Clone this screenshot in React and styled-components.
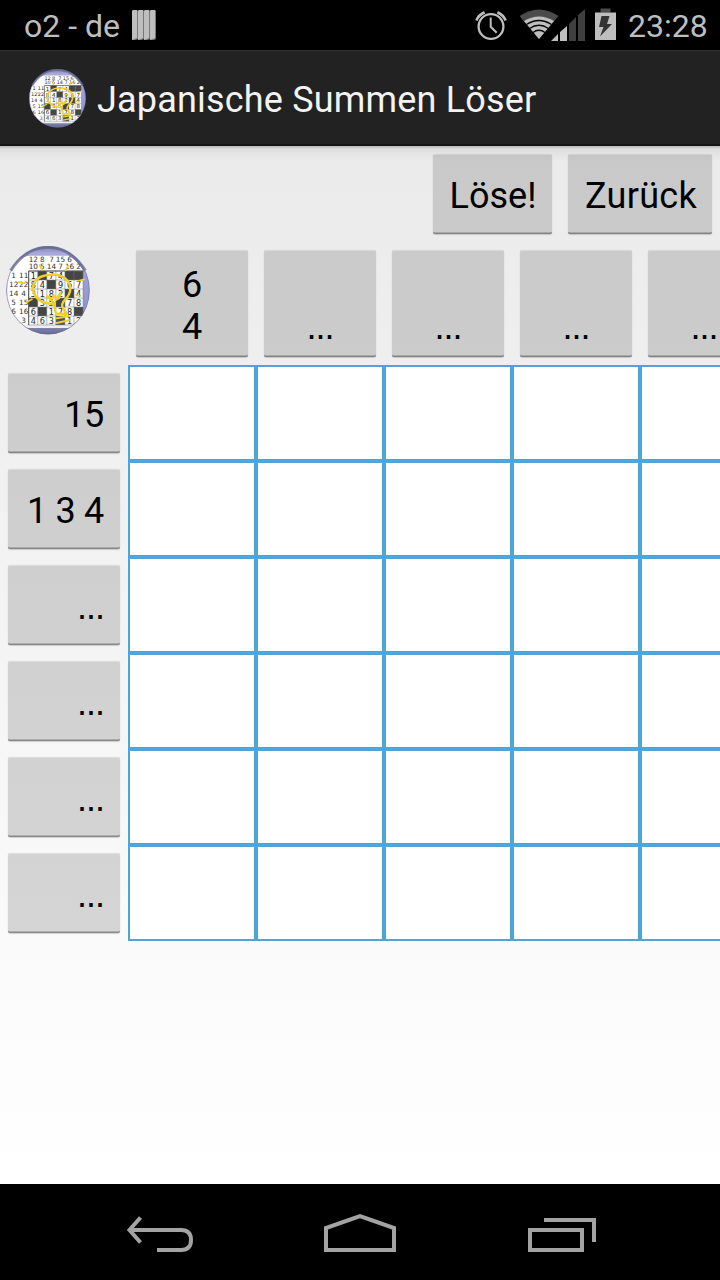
import React from "react";
import styled, { createGlobalStyle } from "styled-components";

const GlobalStyle = createGlobalStyle`
  *, *::before, *::after { box-sizing: border-box; }
  body { margin: 0; background: #000; }
`;

const Screen = styled.div`
  display: flex;
  flex-direction: column;
  width: 720px;
  height: 1280px;
  overflow: hidden;
  font-family: Roboto, sans-serif;
`;

const StatusBar = styled.header`
  display: flex;
  align-items: center;
  flex: none;
  height: 50px;
  padding: 2px 12px 0 24px;
  background: #000;
  color: #bebebe;
  font-size: 32px;
  line-height: 48px;
`;

const Carrier = styled.span`
  width: 108px;
  white-space: nowrap;
`;

const NotificationIcon = styled.svg`
  display: block;
  margin-top: -2px;
`;

const StatusIcons = styled.svg`
  display: block;
  margin-left: auto;
  margin-top: -2px;
`;

const Clock = styled.time`
  width: 80px;
  margin-left: 12px;
  white-space: nowrap;
`;

const ActionBar = styled.div`
  display: flex;
  align-items: center;
  flex: none;
  height: 96px;
  padding: 1px 0 0 29px;
  gap: 11px;
  background: #222;
  border-top: 1px solid #303030;
  border-bottom: 2px solid #171517;
`;

const Title = styled.h1`
  margin: 4px 0 0;
  color: #f3f3f3;
  font-size: 36px;
  font-weight: 400;
  line-height: 42px;
  letter-spacing: 0.18px;
  white-space: nowrap;
`;

const Content = styled.main`
  flex: 1;
  min-height: 0;
  overflow: hidden;
  background: linear-gradient(rgba(0, 0, 0, 0.22), rgba(0, 0, 0, 0.05) 3px, transparent 16px),
    linear-gradient(#ebebeb, #ececec 8%, #fff);
`;

const Actions = styled.div`
  display: flex;
  justify-content: flex-end;
  gap: 16px;
  padding: 8px 8px 0 0;
  height: 96px;
`;

const KeyButton = styled.button`
  display: flex;
  align-items: ${(p) => p.$align || "center"};
  justify-content: ${(p) => p.$justify || "center"};
  flex: none;
  width: ${(p) => p.$width}px;
  height: ${(p) => p.$height}px;
  padding: ${(p) => p.$padding || "4px 0 0 1px"};
  border: 0;
  border-radius: 2px;
  background: rgba(78, 78, 78, 0.215);
  box-shadow: inset 0 -2px 0 -0.5px rgba(0, 0, 0, 0.35), inset 0 1px 0 rgba(255, 255, 255, 0.25),
    0 1px 1px rgba(0, 0, 0, 0.16), 0 0 1px rgba(0, 0, 0, 0.14);
  color: #000;
  font: 400 36px/42px Roboto, sans-serif;
  letter-spacing: ${(p) => p.$spacing || "0"};
  white-space: pre-line;
`;

const Dots = styled.span`
  font-family: "Liberation Sans", sans-serif;
  letter-spacing: -1px;
`;

const HeaderRow = styled.div`
  display: flex;
  height: 123px;
  padding-top: 8px;
`;

const LogoSlot = styled.div`
  flex: none;
  width: 136px;
  padding: 0 0 0 6px;
  margin-top: -4px;
`;

const ColumnKeys = styled.div`
  display: flex;
  gap: 16px;
`;

const Board = styled.div`
  display: flex;
`;

const RowKeys = styled.div`
  display: flex;
  flex-direction: column;
  gap: 16px;
  flex: none;
  width: 128px;
  padding: 8px 0 0 8px;
`;

const Cells = styled.div`
  display: grid;
  grid-template-columns: repeat(5, 128px);
  grid-auto-rows: 96px;
`;

const Cell = styled.div`
  background: #fff;
  border: 2px solid #4fa5d8;
`;

const NavBar = styled.nav`
  flex: none;
  display: flex;
  align-items: flex-start;
  height: 96px;
  padding: 28px 124px 0 126px;
  justify-content: space-between;
  background: #000;
`;

const NavIcon = styled.svg`
  display: block;
  fill: none;
  stroke: #a3a3a3;
  stroke-width: 4;
`;

const LogoDrawing = styled.svg`
  display: block;
  flex: none;
  font-family: "DejaVu Sans", sans-serif;
  font-size: 24.5px;
  text-anchor: middle;
`;

const puzzle = ["1#74##", "84#967", "3182#4", "#35#78", "6#178#", "463#12"];
const columnSums = [
  ["12", "8", "7", "15", "6", ""],
  ["10", "5", "14", "7", "16", "2"],
];
const rowSums = [["1", "11"], ["12", "22"], ["14", "4"], ["5", "15"], ["6", "16"], ["", "3"]];

function Logo({ id, width, height }) {
  return (
    <LogoDrawing width={width} height={height} viewBox="18 18 252 267" preserveAspectRatio="none">
      <defs>
        <clipPath id={`${id}-clip`}><ellipse cx="144" cy="151" rx="125" ry="132" /></clipPath>
        <linearGradient id={`${id}-ring`} x1="0" y1="0" x2="0" y2="1">
          <stop offset="0" stopColor="#777ba4" />
          <stop offset="0.08" stopColor="#a9a8da" />
          <stop offset="0.85" stopColor="#8d8fd0" />
          <stop offset="1" stopColor="#5b5e91" />
        </linearGradient>
        <linearGradient id={`${id}-shade`} x1="0" y1="0" x2="0" y2="1">
          <stop offset="0.75" stopColor="#fff" stopOpacity="0" />
          <stop offset="1" stopColor="#777" stopOpacity="0.3" />
        </linearGradient>
      </defs>
      <g clipPath={`url(#${id}-clip)`}>
        <rect x="18" y="18" width="252" height="267" fill={`url(#${id}-ring)`} />
        <path d="M20 114Q48 48 90 47H205Q230 60 249 91V264H30Q20 238 20 114Z" fill="#fff" />
        {puzzle.map((row, y) =>
          [...row].map((value, x) =>
            value === "#" ? (
              <rect key={`${x}-${y}`} x={86 + x * 27.2} y={93 + y * 27} width="27.2" height="27" fill="#454545" />
            ) : (
              <text key={`${x}-${y}`} x={100 + x * 27.2} y={115.5 + y * 27} fill="#222">{value}</text>
            )
          )
        )}
        <g stroke="#777" strokeWidth="1.6">
          {[0, 1, 2, 3, 4, 5, 6].map((n) => (
            <path key={n} d={`M${86 + n * 27.2} 93v162M86 ${93 + n * 27}h163`} />
          ))}
        </g>
        <path d="M86 256V93H250" fill="none" stroke="#555" strokeWidth="3" />
        <g fill="#333" fontSize="22">
          {columnSums.map((sums, y) =>
            sums.map((sum, x) => <text key={`${x}-${y}`} x={100 + x * 27.2} y={67 + y * 21}>{sum}</text>)
          )}
          {rowSums.map((sums, y) =>
            sums.map((sum, x) => <text key={`${x}-${y}`} x={41 + x * 30} y={115 + y * 27}>{sum}</text>)
          )}
        </g>
        <g fill="none" stroke="#f1cf25" strokeWidth="7.5" strokeLinecap="round" strokeLinejoin="round">
          <path d="M163 194C149 190 132 191 119 181C101 169 95 148 101 132C109 112 133 103 162 104C190 105 210 122 211 145C212 165 199 174 190 185C182 196 190 210 201 221H169C162 211 165 202 163 194Z" />
          <path d="M165 192L141 169L158 176L160 165L169 176L182 158L178 174L166 180M170 235L205 229M170 249L206 241" strokeWidth="6" />
          <path d="M119 75L127 89M205 77L197 91M234 123L252 118M228 165L240 168M80 187L96 178M56 126L73 130" strokeWidth="5" />
        </g>
        <rect x="18" y="18" width="252" height="267" fill={`url(#${id}-shade)`} />
      </g>
      <ellipse cx="144" cy="151" rx="124" ry="131" fill="none" stroke="#65698f" strokeOpacity="0.55" strokeWidth="3" />
      <path d="M32 92Q76 22 144 22Q212 22 256 92" fill="none" stroke="#62678d" strokeOpacity="0.75" strokeWidth="9" />
    </LogoDrawing>
  );
}

function NotificationBars() {
  return (
    <NotificationIcon width="24" height="30" viewBox="0 0 24 30">
      {[0, 6, 12, 18].map((x) => (
        <g key={x}>
          <path d={`M${x} 1l1-1h4l1 1v28l-2 1h-4z`} fill="#777" />
          <path d={`M${x} 1l1-1h4v28l-5 2z`} fill="#bebebe" />
        </g>
      ))}
    </NotificationIcon>
  );
}

function SystemIcons() {
  return (
    <StatusIcons width="142" height="34" viewBox="474 8 142 34">
      <g fill="none" stroke="#bebebe" strokeWidth="2.3">
        <circle cx="491" cy="26.5" r="12.4" />
        <path d="M490.7 17.5v9.3l6 6" strokeWidth="2" />
        <path d="M476.4 20.5q2-5.5 8.2-8.3M505.6 20.5q-2-5.5-8.2-8.3" strokeWidth="2.7" />
      </g>
      <path d="M519.5 16Q539 3 558.5 16L539 39Z" fill="#4b4b4b" />
      <path d="M524 21Q539 12 554 21L539 39Z" fill="#bebebe" />
      <path d="M526.5 24.5Q539 16.5 551.5 24.5M529.5 28.5Q539 22 548.5 28.5M533 32.5Q539 28 545 32.5" fill="none" stroke="#000" strokeWidth="1.3" />
      <path d="M551 41l7-7v7zM560 32l7-6v15h-7z" fill="#bebebe" />
      <path d="M569 24l7-7v24h-7zM578 15l7-6v32h-7z" fill="#3f3f3f" />
      <path d="M600.5 8.5h10v4h-10z" fill="#4b4b4b" />
      <path d="M595 12.5h21v27.5h-21z" fill="#bebebe" />
      <path d="M601.5 16h8l-2.5 8h5l-12 12.5 3.5-9.5h-4.5z" fill="#333" />
    </StatusIcons>
  );
}

const columnLabels = ["6\n4", null, null, null, null];
const rowLabels = ["15", "1 3 4", null, null, null, null];

export default function App() {
  return (
    <Screen>
      <GlobalStyle />
      <StatusBar>
        <Carrier>o2 - de</Carrier>
        <NotificationBars />
        <SystemIcons />
        <Clock>23:28</Clock>
      </StatusBar>
      <ActionBar>
        <Logo id="bar" width={57} height={59} />
        <Title>Japanische Summen Löser</Title>
      </ActionBar>
      <Content>
        <Actions>
          <KeyButton $width={119} $height={80}>Löse!</KeyButton>
          <KeyButton $width={144} $height={80} $padding="4px 0 0 2px" $spacing="0.3px">Zurück</KeyButton>
        </Actions>
        <HeaderRow>
          <LogoSlot><Logo id="page" width={84} height={89} /></LogoSlot>
          <ColumnKeys>
            {columnLabels.map((label, i) => (
              <KeyButton key={i} $width={112} $height={107} $align="flex-end" $padding="0 0 9px">
                {label || <Dots>...</Dots>}
              </KeyButton>
            ))}
          </ColumnKeys>
        </HeaderRow>
        <Board>
          <RowKeys>
            {rowLabels.map((label, i) => (
              <KeyButton key={i} $width={112} $height={80} $justify="flex-end" $padding="4px 16px 0 0" $spacing="-0.3px">
                {label || <Dots>...</Dots>}
              </KeyButton>
            ))}
          </RowKeys>
          <Cells>
            {Array.from({ length: 30 }, (_, i) => <Cell key={i} />)}
          </Cells>
        </Board>
      </Content>
      <NavBar>
        <NavIcon width="68" height="42" viewBox="126 1212 68 42">
          <path d="M129 1230h52q10 0 10 10t-10 10h-24" />
          <path d="M140.5 1217.5L129.5 1230l11 12.5" />
        </NavIcon>
        <NavIcon width="74" height="42" viewBox="323 1212 74 42">
          <path d="M326 1250v-22l34-11.8 34 11.8v22z" />
        </NavIcon>
        <NavIcon width="70" height="42" viewBox="526 1212 70 42">
          <path d="M530 1230h52v20h-52zM544 1220h50v22" />
        </NavIcon>
      </NavBar>
    </Screen>
  );
}
